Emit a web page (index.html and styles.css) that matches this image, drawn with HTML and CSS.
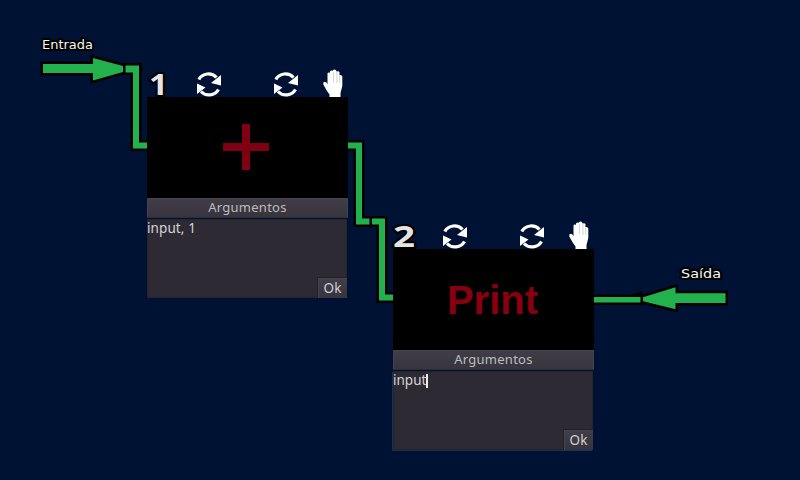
FILE: index.html
```html
<!DOCTYPE html>
<html lang="pt">
<head>
<meta charset="utf-8">
<title>Editor de blocos</title>
<link rel="stylesheet" href="styles.css">
</head>
<body>
<main class="canvas">
  <svg class="wires" width="800" height="480" viewBox="0 0 800 480">
    <defs>
      <symbol id="refresh" viewBox="0 0 26 25">
        <path class="arc" d="M2.800 7.500A11 11 0 0 1 20.500 5.500M22.500 17.500A11 11 0 0 1 5 19.500"/>
        <path class="fill" d="M25 3v10.500l-10-2.500zM1 11.500v10.500l8.500-6.500z"/>
      </symbol>
      <symbol id="hand" viewBox="0 0 21 28">
        <path class="fill" d="M7.500 28v-2.500L5 22 1.300 15.500Q.8 13 2.500 12.700L4.500 13.500 5.500 15.500V5.500Q5.200 3.700 6.500 3.500L8 3.700V2.500Q8.800 1.200 10.900 1.700Q11.500.1 12.800.5T14.700 2.500Q16.500 1.600 17.500 3V6Q20 5.500 20.300 7.500V17L18.500 24v4z"/>
        <path class="crease" d="M11.500 3v10M14.900 3v11M17.700 6v8"/>
      </symbol>
    </defs>
    <g class="wire">
      <path d="M124 65.500h15v77h8v6h-14V72.500h-9z"/>
      <path d="M43 64h50v-6l30 8v6l-30 8.500v-7.500h-50z"/>
      <path d="M342 142.500h20v76h9v6h-15v-76h-14z"/>
      <path d="M372 218.500h13v76h12v6h-18v-76h-7z"/>
      <path d="M590 297h51v5.500h-51z"/>
      <path d="M725.500 293.200h-50v-6l-32.500 10v4l32.500 8v-6.200h50z"/>
    </g>
    <path class="shadow" d="M628 296l14-5v4zM141 67a2 2 0 0 1 0 4z"/>
    <text class="label" x="42" y="49" textLength="51" lengthAdjust="spacingAndGlyphs">Entrada</text>
    <text class="label" x="681" y="278" textLength="40" lengthAdjust="spacingAndGlyphs">Saída</text>
  </svg>

  <section class="node node-first">
    <header class="tools">
      <svg class="index" width="27" height="28"><text x="2" y="26" textLength="19" lengthAdjust="spacingAndGlyphs">1</text></svg>
      <svg class="icon refresh"><use href="#refresh"/></svg>
      <svg class="icon refresh"><use href="#refresh"/></svg>
      <svg class="icon hand"><use href="#hand"/></svg>
    </header>
    <div class="screen"><svg width="48" height="48"><path class="plus" d="M20 0h8v19h19v8H28v19h-8V27H1v-8h19z"/></svg></div>
    <div class="title">Argumentos</div>
    <div class="field"><span class="value first-value">input, 1</span><button class="ok">Ok</button></div>
  </section>

  <section class="node node-second">
    <header class="tools">
      <svg class="index" width="27" height="28"><text x="0" y="26" textLength="22" lengthAdjust="spacingAndGlyphs">2</text></svg>
      <svg class="icon refresh"><use href="#refresh"/></svg>
      <svg class="icon refresh"><use href="#refresh"/></svg>
      <svg class="icon hand"><use href="#hand"/></svg>
    </header>
    <div class="screen"><span class="print">Print</span></div>
    <div class="title">Argumentos</div>
    <div class="field focused"><span class="value">input</span><i class="caret"></i><button class="ok">Ok</button></div>
  </section>
</main>
</body>
</html>
```
FILE: styles.css
```css
* { box-sizing: border-box; }
body { margin: 0; background: #001233; }
.canvas { position: relative; width: 800px; height: 480px; overflow: hidden; font: 14px/20px "Noto Sans", sans-serif; }
.wires { position: absolute; left: 0; top: 0; }
.wire path { fill: #22b14c; stroke: #000; stroke-width: 5px; paint-order: stroke; }
.shadow { fill: #000; }
.label { font: 400 12.5px "DejaVu Sans", sans-serif; fill: #f4f4f4; stroke: #000; stroke-width: 4px; paint-order: stroke; stroke-linejoin: round; }

.node { position: absolute; width: 201px; display: flex; flex-direction: column; }
.node-first { left: 147px; top: 69px; }
.node-second { left: 393px; top: 221px; }
.tools { display: flex; align-items: flex-end; height: 28px; }
.index { overflow: visible; margin-right: 22px; }
.index text { font: 700 29px "Open Sans", sans-serif; fill: #e4e4e4; stroke: #000; stroke-width: 4px; paint-order: stroke; stroke-linejoin: round; }
.icon { flex: none; }
.refresh { width: 26px; height: 25px; margin-right: 51px; }
.refresh + .hand { margin-left: -28px; }
.hand { width: 21px; height: 28px; }
.arc { fill: none; stroke: #fff; stroke-width: 3.2px; }
.fill { fill: #fff; }
.crease { fill: none; stroke: #aaa; stroke-width: .5px; }

.screen { height: 101px; background: #000; display: flex; align-items: center; justify-content: center; padding-right: 3px; }
.plus { fill: #800013; }
.print { font: bold 40px/44px "Liberation Sans", sans-serif; color: #88000f; padding-left: 1px; }
.title { height: 20px; line-height: 16px; text-align: center; letter-spacing: .25px; font-size: 13px; color: #bdbdbd; background: linear-gradient(#403d48, #37343e); border: 1px solid #46434e; border-bottom-color: #302d37; border-radius: 1px; }
.field { display: flex; width: 200px; height: 79px; margin-top: 1px; background: #2d2a33; box-shadow: inset 0 0 1px 1px #27242c; color: #d4d4d4; }
.focused { box-shadow: -1px 1px #12315c, inset 0 0 1px 1px #27242c; }
.value { font-size: 13.5px; line-height: 18px; }
.first-value { letter-spacing: .1px; }
.caret { width: 2px; height: 14px; margin-top: 3px; background: #eee; }
.ok { align-self: flex-end; margin-left: auto; width: 29px; height: 20px; padding: 0 1px 2px 0; border: 1px solid #46434e; border-right: 0; border-bottom: 0; background: linear-gradient(#403d48, #37343e); box-shadow: -1px -1px #222027; font: 13.5px/16px "Noto Sans", sans-serif; color: #d0d0d0; }
```
